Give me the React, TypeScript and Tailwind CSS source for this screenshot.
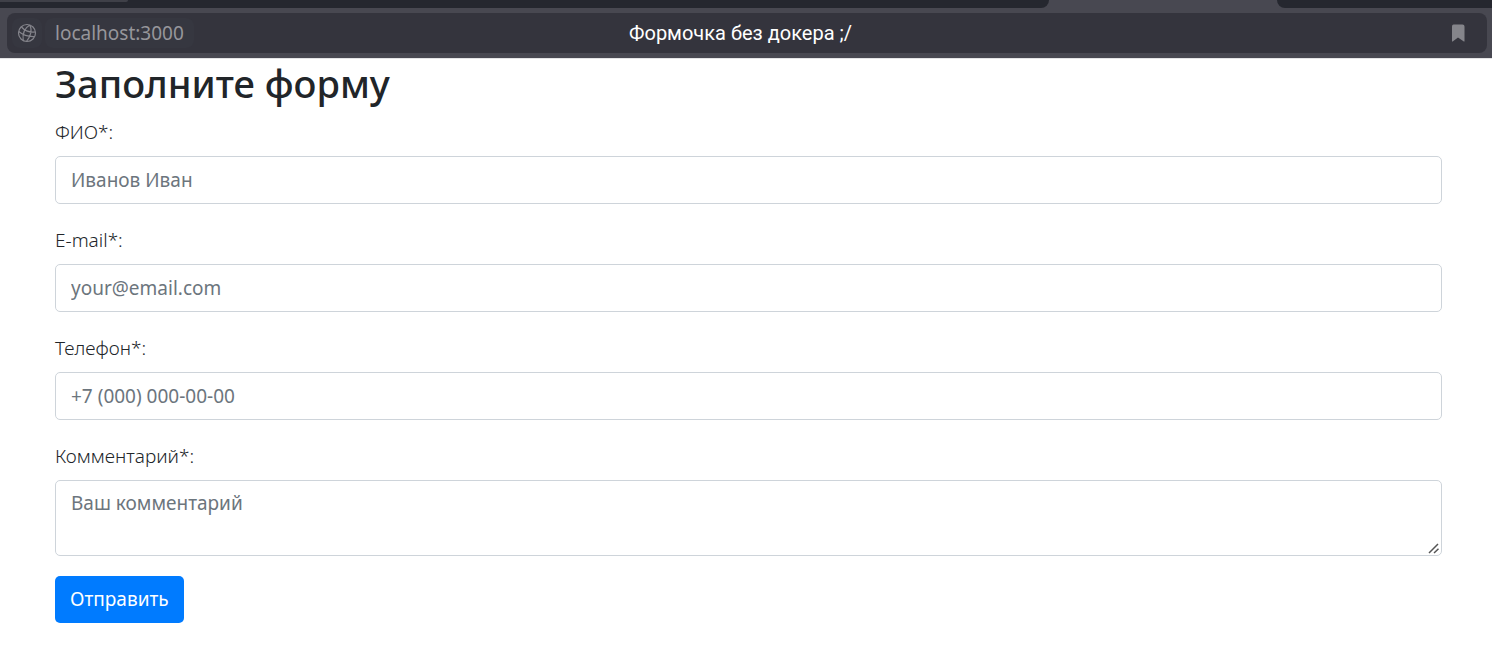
import type { ReactNode } from "react";

function TabStrip() {
  return (
    <div className="flex h-2">
      <div className="flex-1 overflow-hidden rounded-br-lg bg-[#25272f]">
        <div className="h-0.5 w-32 rounded-br-lg bg-[#3f4048]" />
      </div>
      <div className="w-[228px]" />
      <div className="w-[215px] rounded-bl-lg bg-[#25272f]" />
    </div>
  );
}

function GlobeIcon() {
  return (
    <svg viewBox="0 0 20 20" className="size-5" fill="none" stroke="#85858c" strokeWidth="1.2" aria-hidden="true">
      <circle cx="10" cy="10" r="8.500" />
      <path d="M12.800 2C8.500 4.500 5.200 10 6.200 17.500M12.800 2C15.500 7 13.500 14 9.500 18.300M1.700 8.500C6 12 12 13.800 17.500 13.500M4.500 4C7.500 7.500 13 9.500 18.400 9" />
    </svg>
  );
}

function BrowserBar() {
  return (
    <header className="border-b border-[#e4e4e6] bg-[#484851]">
      <TabStrip />
      <div className="py-[5px] pr-[5px] pl-[7px]">
        <div className="grid h-10 grid-cols-[1fr_auto_1fr] items-center rounded-lg bg-[#34343d] pr-[18px] pl-[5px]">
          <div className="flex items-center gap-[3px]">
            <button type="button" aria-label="Сведения о сайте" className="flex h-[30px] w-[30px] items-center justify-center rounded-lg bg-[#363740]">
              <GlobeIcon />
            </button>
            <a href="http://localhost:3000" className="rounded-lg bg-[#363740] px-2.5 text-[19px] leading-[30px] text-[#96969b]">
              localhost:3000
            </a>
          </div>
          <div className="font-[Roboto,sans-serif] text-[20px] leading-8 text-white">Формочка без докера ;/</div>
          <button type="button" aria-label="Добавить в закладки" className="flex h-[30px] items-center justify-self-end">
            <svg viewBox="0 0 22 22" className="size-[22px]" fill="#85858b" aria-hidden="true">
              <path d="M6.500 2.500h9Q17.500 2.500 17.500 4.500V19.500h-.7L11 15.500 5.700 19.500H5V4.500Q5 2.500 6.500 2.500Z" />
            </svg>
          </button>
        </div>
      </div>
    </header>
  );
}

const control =
  "block w-full rounded-[5px] border border-[#ced4da] bg-white px-[15px] text-[19px] leading-[30px] text-[#495057] placeholder:text-[#6c757d] placeholder:opacity-100";

function Field({ id, label, children }: { id: string; label: string; children: ReactNode }) {
  return (
    <div className="mb-5">
      <label htmlFor={id} className="mb-2 block leading-8 font-light">
        {label}
      </label>
      {children}
    </div>
  );
}

export default function App() {
  return (
    <div className="min-h-screen bg-white font-['Noto_Sans',sans-serif] text-[19px] text-[#212529]">
      <BrowserBar />
      <main className="pr-[50px] pl-[55px]">
        <h1 className="mb-2 text-[38px] leading-[49px] font-medium">Заполните форму</h1>
        <form onSubmit={(event) => event.preventDefault()}>
          <Field id="name" label="ФИО*:">
            <input id="name" type="text" placeholder="Иванов Иван" className={`${control} h-12`} />
          </Field>
          <Field id="email" label="E-mail*:">
            <input id="email" type="email" placeholder="your@email.com" className={`${control} h-12`} />
          </Field>
          <Field id="phone" label="Телефон*:">
            <input id="phone" type="tel" placeholder="+7 (000) 000-00-00" className={`${control} h-12`} />
          </Field>
          <Field id="comment" label="Комментарий*:">
            <div className="relative">
              <textarea
                id="comment"
                rows={2}
                placeholder="Ваш комментарий"
                className={`${control} resize-y py-[7px] [&::-webkit-resizer]:bg-transparent`}
              />
              <svg viewBox="0 0 12 12" className="pointer-events-none absolute right-0.5 bottom-0.5 size-3" stroke="#555" strokeWidth="1.5" aria-hidden="true">
                <path d="M1 11 10 2M6 11 10.500 6.800" />
              </svg>
            </div>
          </Field>
          <button type="submit" className="h-[47px] rounded-[5px] bg-[#007bff] px-[15px] text-white">
            Отправить
          </button>
        </form>
      </main>
    </div>
  );
}
